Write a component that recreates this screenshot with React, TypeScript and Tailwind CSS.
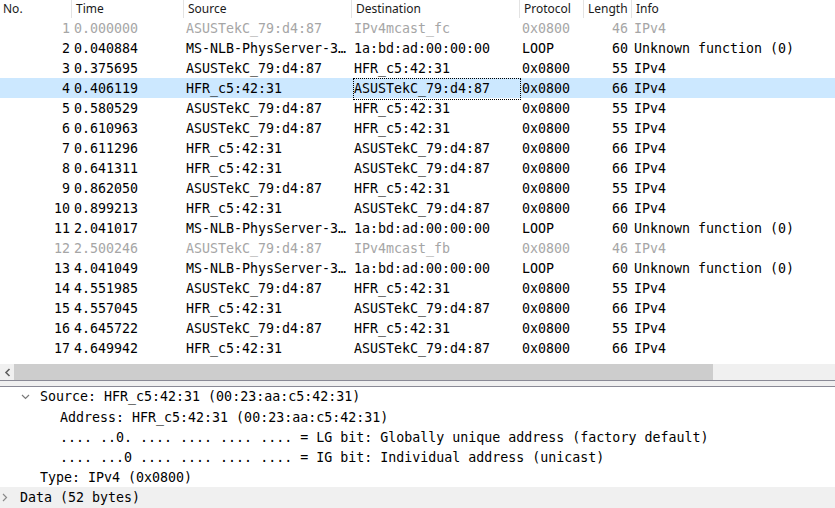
import React from 'react';

const A = 'ASUSTekC_79:d4:87';
const H = 'HFR_c5:42:31';
const M = 'MS-NLB-PhysServer-3…';
const L = '1a:bd:ad:00:00:00';

type Row = [number, string, string, string, string, number, string, boolean?];

const rows: Row[] = [
  [1, '0.000000', A, 'IPv4mcast_fc', '0x0800', 46, 'IPv4', true],
  [2, '0.040884', M, L, 'LOOP', 60, 'Unknown function (0)'],
  [3, '0.375695', A, H, '0x0800', 55, 'IPv4'],
  [4, '0.406119', H, A, '0x0800', 66, 'IPv4'],
  [5, '0.580529', A, H, '0x0800', 55, 'IPv4'],
  [6, '0.610963', A, H, '0x0800', 55, 'IPv4'],
  [7, '0.611296', H, A, '0x0800', 66, 'IPv4'],
  [8, '0.641311', H, A, '0x0800', 66, 'IPv4'],
  [9, '0.862050', A, H, '0x0800', 55, 'IPv4'],
  [10, '0.899213', H, A, '0x0800', 66, 'IPv4'],
  [11, '2.041017', M, L, 'LOOP', 60, 'Unknown function (0)'],
  [12, '2.500246', A, 'IPv4mcast_fb', '0x0800', 46, 'IPv4', true],
  [13, '4.041049', M, L, 'LOOP', 60, 'Unknown function (0)'],
  [14, '4.551985', A, H, '0x0800', 55, 'IPv4'],
  [15, '4.557045', H, A, '0x0800', 66, 'IPv4'],
  [16, '4.645722', A, H, '0x0800', 55, 'IPv4'],
  [17, '4.649942', H, A, '0x0800', 66, 'IPv4'],
];

const cols = 'grid grid-cols-[71px_112px_168px_168px_64px_48px_1fr]';

function ChevronDown() {
  return (
    <svg width="9" height="6" viewBox="0 0 9 6" className="block">
      <path d="M1 1 L4.5 4.5 L8 1" fill="none" stroke="#7a7a7a" strokeWidth="1.2" />
    </svg>
  );
}

function ChevronRight() {
  return (
    <svg width="6" height="9" viewBox="0 0 6 9" className="block">
      <path d="M1 1 L4.5 4.5 L1 8" fill="none" stroke="#8a8a8a" strokeWidth="1.2" />
    </svg>
  );
}

export default function App() {
  return (
    <div className="w-[835px] h-[508px] bg-white overflow-hidden font-['DejaVu_Sans_Mono',monospace] text-[13.3px] text-black">
      {/* header */}
      <div className={`${cols} h-[18px] font-['Noto_Sans',sans-serif] text-[12px] leading-[18px] text-[#1a1a1a]`}>
        <div className="pl-[3px]">No.</div>
        <div className="pl-[4px] border-l border-[#e3e3e3]">Time</div>
        <div className="pl-[4px] border-l border-[#e3e3e3]">Source</div>
        <div className="pl-[4px] border-l border-[#e3e3e3]">Destination</div>
        <div className="pl-[4px] border-l border-[#e3e3e3]">Protocol</div>
        <div className="pl-[4px] border-l border-[#e3e3e3]">Length</div>
        <div className="pl-[4px] border-l border-[#e3e3e3]">Info</div>
      </div>

      {/* packet list */}
      <div className="h-[346px]">
        {rows.map(([no, time, src, dst, proto, len, info, dim]) => {
          const sel = no === 4;
          return (
            <div
              key={no}
              className={`${cols} h-[20px] leading-[22px] whitespace-nowrap ${sel ? 'bg-[#cce8ff]' : ''} ${dim ? 'text-[#a6a6a6]' : ''}`}
            >
              <div className="text-right pr-[1px]">{no}</div>
              <div className="pl-[3px]">{time}</div>
              <div className="pl-[3px] overflow-hidden">{src}</div>
              <div className={sel ? 'border border-dotted border-black ml-[2px] -mr-[2px] leading-[20px]' : 'pl-[3px]'}>{dst}</div>
              <div className="pl-[3px]">{proto}</div>
              <div className="text-right pr-[3px]">{len}</div>
              <div className="pl-[3px]">{info}</div>
            </div>
          );
        })}
      </div>

      {/* horizontal scrollbar */}
      <div className="flex h-[16px] bg-[#f0f0f0]">
        <div className="w-[14px] flex items-center justify-center">
          <svg width="7" height="9" viewBox="0 0 7 9">
            <path d="M5.5 1 L2 4.5 L5.5 8" fill="none" stroke="#606060" strokeWidth="1.6" />
          </svg>
        </div>
        <div className="w-[699px] bg-[#cdcdcd]" />
      </div>

      {/* splitter */}
      <div className="h-[7px] border-y border-[#8a8a96] bg-[#f0f0f0]" />

      {/* details pane */}
      <div className="leading-[22px] whitespace-nowrap">
        <div className="flex h-[20px] items-center">
          <div className="w-[40px] flex justify-end pr-[10px]">
            <ChevronDown />
          </div>
          <span>Source: HFR_c5:42:31 (00:23:aa:c5:42:31)</span>
        </div>
        <div className="h-[20px] pl-[60px]">Address: HFR_c5:42:31 (00:23:aa:c5:42:31)</div>
        <div className="h-[20px] pl-[60px]">.... ..0. .... .... .... .... = LG bit: Globally unique address (factory default)</div>
        <div className="h-[20px] pl-[60px]">.... ...0 .... .... .... .... = IG bit: Individual address (unicast)</div>
        <div className="h-[20px] pl-[40px]">Type: IPv4 (0x0800)</div>
        <div className="flex h-[21px] items-center bg-[#f0f0f0]">
          <div className="w-[20px] pl-[2px]">
            <ChevronRight />
          </div>
          <span>Data (52 bytes)</span>
        </div>
      </div>
    </div>
  );
}
